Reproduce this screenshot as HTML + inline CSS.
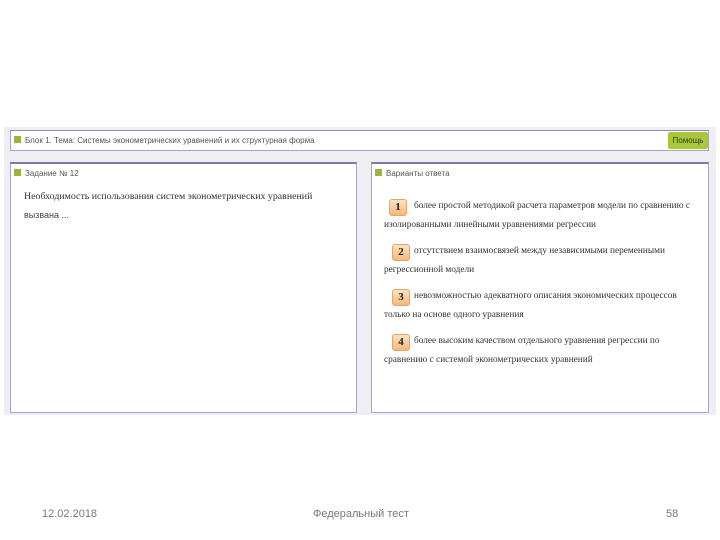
<!DOCTYPE html>
<html><head><meta charset="utf-8"><style>
body{margin:0;width:720px;height:540px;background:#fff;position:relative;font-family:"Liberation Sans",sans-serif;overflow:hidden}
.bg{position:absolute;left:4px;top:127px;width:712px;height:288px;background:#eeeef3}
.box{position:absolute;background:#fff;border:1px solid #a6a2c8;border-top:2px solid #7d78a8}
.sq{display:inline-block;width:7px;height:7px;background:#9bb53c;margin-right:4px;vertical-align:0}
.small{font-size:8px;color:#555}
.serif{font-family:"Liberation Serif",serif;color:#333}
.num{position:absolute;width:16px;height:15px;background:linear-gradient(#fde3c4,#f6b77a);border:1px solid #e2a66a;border-radius:3px;font:bold 11px "Liberation Serif",serif;text-align:center;line-height:15px;color:#222}
.opt{position:absolute;left:12px;font-size:9.3px;line-height:19px;width:320px}
.foot{position:absolute;top:508px;font-size:11px;color:#777}
</style></head><body>
<div class="bg"></div>
<div class="box" style="left:10px;top:130px;width:697px;height:19px;border-top:1px solid #8e89b5">
<div class="small" style="position:absolute;left:3px;top:5px"><span class="sq"></span>Блок 1. Тема: Системы эконометрических уравнений и их структурная форма</div>
<div style="position:absolute;right:0;top:1px;width:40px;height:17px;background:#a8c83a;border-radius:2px;font-size:8px;color:#333;text-align:center;line-height:17px">Помощь</div>
</div>
<div class="box" style="left:10px;top:162px;width:345px;height:248px">
<div class="small" style="position:absolute;left:3px;top:5px"><span class="sq"></span>Задание № 12</div>
<div class="serif" style="position:absolute;left:13px;top:24px;font-size:9.9px;line-height:18px;width:330px;white-space:nowrap">Необходимость использования систем эконометрических уравнений<br><span style="font-size:9px;font-family:'Liberation Sans';color:#444">вызвана ...</span></div>
</div>
<div class="box" style="left:371px;top:162px;width:336px;height:248px">
<div class="small" style="position:absolute;left:3px;top:5px"><span class="sq"></span>Варианты ответа</div>
<div class="num" style="left:17px;top:35px">1</div>
<div class="opt serif" style="top:33px;text-indent:30px">более простой методикой расчета параметров модели по сравнению с изолированными линейными уравнениями регрессии</div>
<div class="num" style="left:20px;top:80px">2</div>
<div class="opt serif" style="top:78px;text-indent:30px">отсутствием взаимосвязей между независимыми переменными регрессионной модели</div>
<div class="num" style="left:20px;top:125px">3</div>
<div class="opt serif" style="top:123px;text-indent:30px">невозможностью адекватного описания экономических процессов только на основе одного уравнения</div>
<div class="num" style="left:20px;top:170px">4</div>
<div class="opt serif" style="top:168px;text-indent:30px">более высоким качеством отдельного уравнения регрессии по сравнению с системой эконометрических уравнений</div>
</div>
<div class="foot" style="left:42px">12.02.2018</div>
<div class="foot" style="left:313px">Федеральный тест</div>
<div class="foot" style="left:666px">58</div>
</body></html>
